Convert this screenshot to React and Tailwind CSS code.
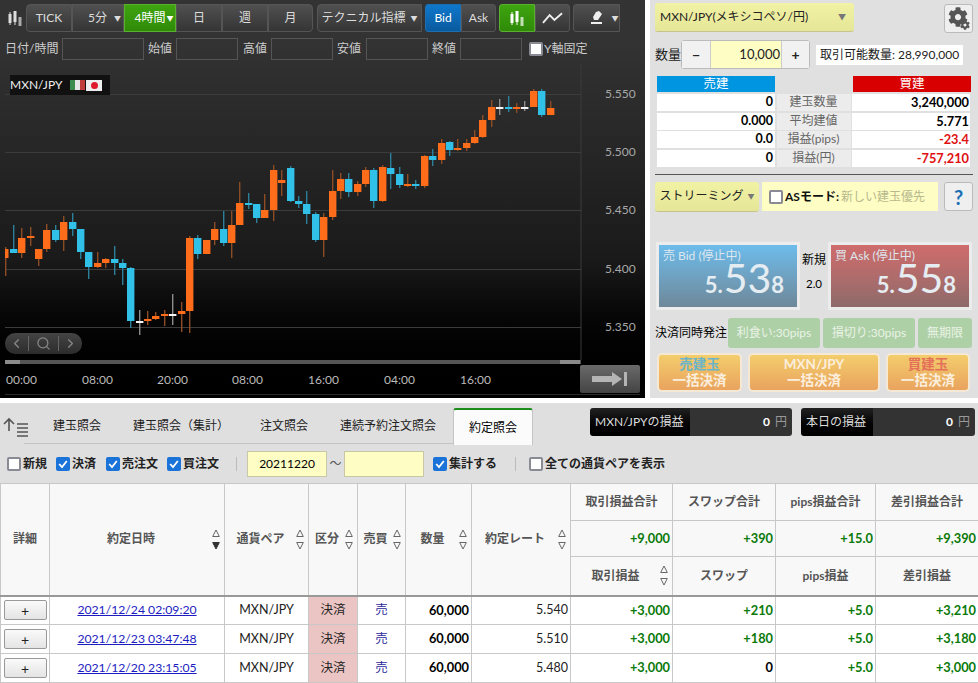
import { ChevronLeft, ChevronRight, Search } from 'lucide-react';
import { FaCog } from 'react-icons/fa';

const ORANGE = '#ff6d1a';
const BLUE = '#31c0e8';
const WHITE = '#f4f4f4';
const WICK = { o: '#8d4c24', b: '#2b7f98', w: '#8c8c8c' };
const BODY = { o: ORANGE, b: BLUE, w: WHITE };

// x, body top, body bottom, wick top, wick bottom, colour
const CANDLES = [
  [5, 249, 258, 247, 276, 'o'], [13, 249, 253, 225, 253, 'b'], [21, 238, 253, 228, 258, 'o'], [30, 236, 238, 227, 246, 'o'],
  [38, 249, 259, 249, 266, 'o'], [46, 230, 249, 224, 252, 'o'], [55, 230, 240, 225, 242, 'b'], [63, 222, 240, 216, 251, 'o'],
  [72, 222, 229, 213, 236, 'b'], [80, 229, 252, 229, 259, 'b'], [88, 252, 267, 252, 279, 'b'], [97, 263, 267, 252, 268, 'o'],
  [105, 259, 263, 258, 268, 'o'], [114, 259, 263, 246, 275, 'b'], [122, 263, 268, 259, 285, 'b'], [130, 268, 321, 267, 328, 'b'],
  [139, 321, 323, 310, 335, 'w'], [147, 319, 321, 311, 325, 'o'], [155, 316, 319, 312, 320, 'o'], [164, 314, 316, 310, 326, 'o'],
  [172, 314, 316, 294, 325, 'w'], [181, 311, 314, 302, 332, 'o'], [189, 238, 311, 236, 333, 'o'], [197, 238, 254, 235, 259, 'b'],
  [206, 240, 254, 240, 254, 'o'], [214, 229, 240, 222, 245, 'o'], [223, 229, 243, 211, 246, 'b'], [231, 225, 243, 211, 258, 'o'],
  [239, 203, 225, 182, 225, 'o'], [248, 203, 205, 193, 209, 'b'], [256, 204, 218, 204, 223, 'b'], [264, 210, 218, 194, 218, 'o'],
  [273, 170, 210, 165, 221, 'o'], [281, 180, 183, 170, 196, 'o'], [290, 168, 201, 166, 202, 'b'], [298, 201, 204, 196, 208, 'b'],
  [306, 204, 214, 191, 224, 'b'], [315, 214, 240, 212, 242, 'b'], [323, 217, 240, 213, 257, 'o'], [332, 191, 217, 170, 220, 'o'],
  [340, 179, 191, 173, 199, 'o'], [348, 179, 192, 173, 197, 'b'], [357, 184, 192, 181, 196, 'o'], [365, 170, 184, 167, 187, 'o'],
  [373, 170, 201, 168, 208, 'b'], [382, 167, 201, 165, 202, 'o'], [390, 168, 174, 153, 189, 'b'], [399, 174, 185, 167, 188, 'b'],
  [407, 184, 186, 174, 187, 'o'], [415, 184, 186, 180, 189, 'b'], [424, 156, 186, 155, 188, 'o'], [432, 156, 160, 149, 166, 'b'],
  [441, 143, 160, 139, 164, 'o'], [449, 142, 150, 141, 156, 'b'], [457, 148, 150, 139, 151, 'o'], [466, 143, 148, 139, 151, 'o'],
  [474, 137, 143, 130, 144, 'o'], [482, 120, 137, 115, 138, 'o'], [491, 107, 120, 100, 127, 'o'], [499, 107, 109, 99, 115, 'w'],
  [508, 107, 109, 96, 112, 'b'], [516, 107, 109, 103, 113, 'o'], [524, 107, 109, 101, 111, 'w'], [533, 91, 107, 89, 107, 'o'],
  [541, 91, 115, 89, 117, 'b'], [550, 108, 115, 101, 115, 'o'],
];

const GRID = [
  [94, '5.550'],
  [152, '5.500'],
  [210, '5.450'],
  [269, '5.400'],
  [327, '5.350'],
];
const TIMES = [[6, '00:00'], [82, '08:00'], [157, '20:00'], [232, '08:00'], [308, '16:00'], [384, '04:00'], [460, '16:00']];

const TRADES = [
  ['2021/12/24 02:09:20', '5.540', '+3,000', '+210', '+5.0', '+3,210'],
  ['2021/12/23 03:47:48', '5.510', '+3,000', '+180', '+5.0', '+3,180'],
  ['2021/12/20 23:15:05', '5.480', '+3,000', '0', '+5.0', '+3,000'],
];

const TONES = {
  dark: 'text-[#ddd] border-[#555] from-[#505050] to-[#353535]',
  green: 'text-white border-[#5cb030] from-[#3ea40f] to-[#2f8a08]',
  blue: 'text-white border-[#1c6fb0] from-[#0f78cc] to-[#0a5a9e]',
};

function CandleIcon({ className }) {
  return (
    <svg viewBox="0 0 14 15" className={className} fill="currentColor">
      <rect x="0.5" y="3" width="3" height="9" />
      <rect x="1.5" y="1" width="1" height="13" />
      <rect x="5.5" y="0" width="3" height="11" />
      <rect x="6.5" y="0" width="1" height="14" />
      <rect x="10.5" y="6" width="3" height="9" opacity="0.7" />
    </svg>
  );
}

function ToolButton({ tone = 'dark', className, children }) {
  return (
    <div className={`h-[28px] flex items-center justify-center text-[12px] border bg-linear-to-b ${TONES[tone]} ${className}`}>
      {children}
    </div>
  );
}

function Toolbar() {
  return (
    <div className="flex items-center h-[28px] mt-[4px]">
      <CandleIcon className="w-[14px] h-[15px] ml-[8px] mr-[4px] text-[#ddd]" />
      <ToolButton className="w-[46px] rounded-tl-[4px] rounded-bl-[4px]">TICK</ToolButton>
      <ToolButton className="w-[52px] gap-[7px] pl-[13px]">5分<span className="text-[7px]">▼</span></ToolButton>
      <ToolButton tone="green" className="w-[52px] gap-[1px] pl-[8px]">4時間<span className="text-[7px]">▼</span></ToolButton>
      <ToolButton className="w-[46px]">日</ToolButton>
      <ToolButton className="w-[46px]">週</ToolButton>
      <ToolButton className="w-[45px] rounded-tr-[4px] rounded-br-[4px]">月</ToolButton>
      <ToolButton className="w-[105px] ml-[4px] gap-[5px] rounded-l-[4px]">テクニカル指標<span className="text-[7px]">▼</span></ToolButton>
      <ToolButton tone="blue" className="w-[36px] ml-[3px] rounded-l-[3px]">Bid</ToolButton>
      <ToolButton className="w-[35px] rounded-r-[3px]">Ask</ToolButton>
      <ToolButton tone="green" className="w-[36px] ml-[3px] rounded-l-[3px]">
        <CandleIcon className="w-[14px] h-[15px]" />
      </ToolButton>
      <ToolButton className="w-[35px] rounded-r-[3px]">
        <svg viewBox="0 0 22 12" className="w-[21px] h-[12px]" fill="none" stroke="#eee" strokeWidth="2">
          <path d="M1 11 L8 3 L13 8 L21 1" />
        </svg>
      </ToolButton>
      <ToolButton className="w-[47px] ml-[3px] gap-[9px] pl-[16px] rounded-l-[3px]">
        <svg viewBox="0 0 12 14" className="w-[12px] h-[14px]" fill="#eee">
          <path d="M5 1 L8 0 L11 3 L7 9 L3 9 L2 6 Z" />
          <rect x="0" y="11" width="11" height="2" />
        </svg>
        <span className="text-[7px]">▼</span>
      </ToolButton>
    </div>
  );
}

function OhlcField({ label, labelClass, inputClass }) {
  return (
    <>
      <span className={`text-[12px] text-[#ccc] ${labelClass}`}>{label}</span>
      <div className={`h-[22px] border border-[#555] ${inputClass}`} />
    </>
  );
}

function OhlcRow() {
  return (
    <div className="flex items-center h-[22px] mt-[6px] pl-[5px]">
      <OhlcField label="日付/時間" labelClass="w-[57px]" inputClass="w-[82px]" />
      <OhlcField label="始値" labelClass="w-[28px] ml-[4px]" inputClass="w-[62px]" />
      <OhlcField label="高値" labelClass="w-[28px] ml-[5px]" inputClass="w-[62px]" />
      <OhlcField label="安値" labelClass="w-[29px] ml-[4px]" inputClass="w-[62px]" />
      <OhlcField label="終値" labelClass="w-[28px] ml-[4px]" inputClass="w-[62px]" />
      <span className="w-[14px] h-[14px] ml-[7px] bg-white border-2 border-[#8a8a94] rounded-[2px]" />
      <span className="ml-[1px] text-[12px] text-[#ccc]">Y軸固定</span>
    </div>
  );
}

function ChartSvg() {
  return (
    <svg viewBox="0 60 645 338" className="absolute left-0 top-0 w-[645px] h-[338px]">
      <line x1="581" x2="581" y1="64" y2="360" stroke="#3a3a3a" />
      {GRID.map(([y, label]) => (
        <g key={y}>
          <line x1="5" x2="581" y1={y + 0.5} y2={y + 0.5} stroke="#3c3c3c" />
          <text x="605" y={y + 4} fontSize="12" fill="#a8a8a8">{label}</text>
        </g>
      ))}
      {CANDLES.map(([x, top, bottom, wickTop, wickBottom, c]) => (
        <g key={x}>
          <rect x={x} y={wickTop} width="1.4" height={wickBottom - wickTop} fill={WICK[c]} />
          <rect x={Math.max(x - 3, 5)} y={top} width={x - 3 < 5 ? 3.5 : 7.4} height={bottom - top} fill={BODY[c]} />
        </g>
      ))}
      <rect x="5" y="360" width="576" height="4" fill="#555" />
      <rect x="5" y="360" width="15" height="4" fill="#8a8a8a" />
      <rect x="560" y="360" width="20" height="4" fill="#8a8a8a" />
      {TIMES.map(([x, label], i) => (
        <text key={i} x={x} y="384" fontSize="12" fill="#bbb">{label}</text>
      ))}
      <line x1="5" x2="640" y1="394.5" y2="394.5" stroke="#2b2b2b" />
    </svg>
  );
}

function ChartPanel() {
  return (
    <div className="w-[645px] h-[398px] bg-linear-to-b from-[#333] from-10% via-[#1a1a1a] via-65% to-black">
      <Toolbar />
      <OhlcRow />
      <div className="relative h-[338px]">
        <ChartSvg />
        <div className="absolute left-[10px] top-[15px] w-[100px] h-[20px] bg-[#111] flex items-center">
          <span className="text-[12px] text-[#eee]">MXN/JPY</span>
          <span className="flex w-[15px] h-[10px] ml-[8px]">
            <span className="flex-1 bg-[#3d8b4d]" />
            <span className="flex-1 bg-[#e6e6e6]" />
            <span className="flex-1 bg-[#c23b3b]" />
          </span>
          <span className="flex items-center justify-center w-[16px] h-[11px] ml-[1px] bg-[#eee]">
            <span className="w-[7px] h-[7px] rounded-full bg-[#e0192c]" />
          </span>
        </div>
        <div className="absolute left-[5px] top-[273px] w-[77px] h-[21px] rounded-[10px] bg-linear-to-b from-[#444] to-[#2c2c2c] flex items-center text-[#888]">
          <span className="w-[24px] flex justify-center border-r border-[#666]"><ChevronLeft size={15} /></span>
          <span className="w-[30px] flex justify-center border-r border-[#666]"><Search size={15} /></span>
          <span className="flex-1 flex justify-center"><ChevronRight size={15} /></span>
        </div>
        <div className="absolute left-[580px] top-[305px] w-[60px] h-[28px] rounded-[2px] bg-linear-to-b from-[#6a6a6a] to-[#444] flex items-center justify-center">
          <svg viewBox="0 0 36 14" className="w-[36px] h-[14px]" fill="#b4b4b4">
            <path d="M0 4 H20 V0 L30 7 L20 14 V10 H0 Z" />
            <rect x="32" y="0" width="3" height="14" />
          </svg>
        </div>
      </div>
    </div>
  );
}

function PositionRow({ sell, label, buy, buyClass }) {
  return (
    <div className="flex h-[17px] mb-[1.5px] items-center text-[12px]">
      <span className="w-[118px] h-full bg-white text-right pr-[2px] text-[12.5px] font-bold text-black leading-[16px]">{sell}</span>
      <span className="w-[74px] h-full mx-[1.5px] bg-[#ececec] text-center text-[#666] leading-[16px]">{label}</span>
      <span className={`w-[118px] h-full bg-white text-right pr-[1px] text-[12.8px] font-bold leading-[16px] ${buyClass}`}>{buy}</span>
    </div>
  );
}

function PriceBox({ title, big, gradient }) {
  return (
    <div className={`w-[144px] h-[68px] border-[3px] border-[#ececec] ${gradient}`}>
      <div className="pl-[4px] pt-[2px] text-[12px] text-[#dde7ee] leading-[18px]">{title}</div>
      <div className="flex items-baseline justify-end pr-[13px] text-[#e6edf2] mt-[-7px]">
        <span className="text-[22px] font-bold leading-[40px] mr-[1px]">5.</span>
        <span className="text-[41px] leading-[40px]">{big}</span>
        <span className="text-[22px] font-bold leading-[40px]">8</span>
      </div>
    </div>
  );
}

function SettleButton({ className, top, topClass }) {
  return (
    <div className={`h-[39px] rounded-[5px] border-2 border-[#f5e8d4] bg-linear-to-b from-[#f3cd6c] to-[#e9a35e] flex flex-col items-center justify-center text-[13.5px] leading-[16.2px] font-bold ${className}`}>
      <span className={topClass}>{top}</span>
      <span className="text-[#fbeedd]">一括決済</span>
    </div>
  );
}

function OrderPanel() {
  return (
    <div className="w-[328px] h-[398px] ml-[5px] bg-[#e0e0e0] pl-[5px] pr-[5px] text-[#222]">
      <div className="flex justify-between pt-[3px]">
        <div className="w-[199px] h-[29px] rounded-[3px] border-b border-[#c6c48c] bg-linear-to-b from-[#f2f2a4] to-[#e6e698] flex items-center justify-between pl-[5px] pr-[8px] text-[12px]">
          <span>MXN/JPY(メキシコペソ/円)</span>
          <span className="text-[8px] text-[#777]">▼</span>
        </div>
        <div className="relative w-[29px] h-[29px] mt-[1px] rounded-[3px] border border-[#bbb] bg-[#efefef]">
          <FaCog className="absolute left-[3px] top-[2px] text-[#555]" size={20} />
          <FaCog className="absolute right-[2px] bottom-[2px] text-[#555]" size={10} />
        </div>
      </div>
      <div className="flex items-center mt-[7px] h-[29px]">
        <span className="w-[26px] text-[13px] leading-none">数量</span>
        <div className="flex h-[29px] w-[129px] rounded-[3px] border border-[#bbb] text-[14px]">
          <span className="w-[29px] flex items-center justify-center bg-[#f1f1f1] border-r border-[#ccc] font-bold">−</span>
          <span className="flex-1 flex items-center justify-end pr-[1px] bg-[#fdfdc4] text-[13px]">10,000</span>
          <span className="w-[28px] flex items-center justify-center bg-[#f1f1f1] border-l border-[#ccc] font-bold">+</span>
        </div>
        <span className="ml-[6px] w-[147px] h-[20px] bg-white text-[12px] leading-[20px] text-center">取引可能数量: 28,990,000</span>
      </div>
      <div className="mt-[7px] ml-[2px]">
        <div className="flex h-[16px] mb-[2px] text-[12.5px] text-white text-center leading-[16px]">
          <span className="w-[118px] bg-[#0095e0]">売建</span>
          <span className="w-[78px]" />
          <span className="w-[118px] bg-[#d80000]">買建</span>
        </div>
        <PositionRow sell="0" label="建玉数量" buy="3,240,000" buyClass="text-black" />
        <PositionRow sell="0.000" label="平均建値" buy="5.771" buyClass="text-black" />
        <PositionRow sell="0.0" label="損益(pips)" buy="-23.4" buyClass="text-[#e01010]" />
        <PositionRow sell="0" label="損益(円)" buy="-757,210" buyClass="text-[#e01010]" />
      </div>
      <div className="h-[1px] bg-[#555] mt-[7px] w-[318px]" />
      <div className="flex items-center mt-[7px] h-[30px]">
        <div className="w-[104px] h-[30px] rounded-[3px] border-b border-[#c6c48c] bg-linear-to-b from-[#f2f2a4] to-[#e6e698] flex items-center justify-center gap-[4px] text-[12px]">
          ストリーミング<span className="text-[7px] text-[#777]">▼</span>
        </div>
        <div className="ml-[3px] w-[176px] h-[29px] bg-[#fdfdc4] flex items-center pl-[7px] text-[12px]">
          <span className="w-[14px] h-[14px] bg-white border-2 border-[#8a8a94] rounded-[2px]" />
          <span className="ml-[2px] font-bold text-[#111]">ASモード:</span>
          <span className="ml-[2px] text-[#b8b88c]">新しい建玉優先</span>
        </div>
        <div className="ml-[6px] w-[29px] h-[29px] rounded-[3px] border border-[#bbb] bg-[#efefef] flex items-center justify-center text-[20px] font-bold text-[#1a6fb5]">?</div>
      </div>
      <div className="flex items-stretch mt-[30px] ml-[1px]">
        <PriceBox title="売 Bid (停止中)" big="53" gradient="bg-linear-to-b from-[#6cbcec] to-[#6e8899]" />
        <div className="w-[28px] flex flex-col items-center text-[12px] text-black pt-[9px]">
          <span>新規</span>
          <span className="mt-[6px] text-[11.5px]">2.0</span>
        </div>
        <PriceBox title="買 Ask (停止中)" big="55" gradient="bg-linear-to-b from-[#d06c6c] to-[#8e6a6a]" />
      </div>
      <div className="flex items-center mt-[8px] h-[30px]">
        <span className="w-[73px] text-[12px] text-black whitespace-nowrap">決済同時発注</span>
        <div className="w-[92px] h-[30px] rounded-[3px] bg-[#aed0a6] text-[12px] text-[#eaf3e7] flex items-center justify-center">利食い:30pips</div>
        <div className="w-[92px] h-[30px] ml-[3px] rounded-[3px] bg-[#aed0a6] text-[12px] text-[#eaf3e7] flex items-center justify-center">損切り:30pips</div>
        <div className="w-[54px] h-[30px] ml-[3px] rounded-[3px] bg-[#aed0a6] text-[12px] text-[#eaf3e7] flex items-center justify-center">無期限</div>
      </div>
      <div className="flex mt-[5px] ml-[2px]">
        <SettleButton className="w-[85px]" top="売建玉" topClass="text-[#6cb4c8]" />
        <SettleButton className="w-[132px] ml-[6px]" top="MXN/JPY" topClass="text-[#fbeedd]" />
        <SettleButton className="w-[84px] ml-[6px]" top="買建玉" topClass="text-[#e4705a]" />
      </div>
    </div>
  );
}

function Check({ checked }) {
  if (!checked) {
    return <span className="w-[14px] h-[14px] bg-white border-2 border-[#8a8a94] rounded-[2px]" />;
  }
  return (
    <span className="w-[14px] h-[14px] bg-[#1a73d8] rounded-[2px] flex items-center justify-center">
      <svg viewBox="0 0 12 12" className="w-[12px] h-[12px]" fill="none" stroke="#fff" strokeWidth="1.8">
        <path d="M2.2 6 L5 9 L9.8 3" />
      </svg>
    </span>
  );
}

function Filter({ checked, label, className }) {
  return (
    <label className={`flex items-center gap-[2px] font-bold text-[12px] text-[#222] ${className}`}>
      <Check checked={checked} />
      {label}
    </label>
  );
}

function TabBar() {
  const tabs = [
    ['建玉照会', 'ml-[24px]'],
    ['建玉照会（集計）', 'ml-[32px]'],
    ['注文照会', 'ml-[31px]'],
    ['連続予約注文照会', 'ml-[32px]'],
  ];
  return (
    <div className="flex h-[41px] pt-[5px]">
      <svg viewBox="0 0 26 20" className="w-[26px] h-[20px] ml-[3px] mt-[9px]" fill="none" stroke="#555" strokeWidth="1.6">
        <path d="M6 14 V2 M1 7 L6 2 L11 7" />
        <path d="M14 7 H25 M14 11 H25 M14 15 H25 M14 19 H25" strokeWidth="1.3" />
      </svg>
      <div className="flex border-b border-[#c4c4c4] h-[36px] items-center ml-[-5px] pl-[5px] w-[429px]">
        {tabs.map(([label, margin]) => (
          <span key={label} className={`text-[12px] text-[#222] whitespace-nowrap ${margin}`}>{label}</span>
        ))}
      </div>
      <div className="w-[80px] h-[37px] bg-[#fbfbfb] border border-[#c4c4c4] border-t-2 border-t-[#1c8c1c] border-b-0 rounded-t-[3px] text-[12px] flex items-center justify-center">約定照会</div>
      <div className="flex ml-[57px] h-[28px]">
        <div className="w-[100px] rounded-l-[3px] bg-linear-to-b from-[#222] to-black text-[12px] text-[#ddd] flex items-center pl-[5px]">MXN/JPYの損益</div>
        <div className="w-[102px] rounded-r-[3px] bg-[#333] text-[12px] text-[#999] flex items-center justify-end pr-[5px] gap-[5px]"><span className="font-bold text-white">0</span>円</div>
        <div className="w-[72px] ml-[9px] rounded-l-[3px] bg-linear-to-b from-[#222] to-black text-[12px] text-[#ddd] flex items-center pl-[5px]">本日の損益</div>
        <div className="w-[102px] rounded-r-[3px] bg-[#333] text-[12px] text-[#999] flex items-center justify-end pr-[5px] gap-[5px]"><span className="font-bold text-white">0</span>円</div>
      </div>
    </div>
  );
}

function FilterRow() {
  return (
    <div className="flex items-center h-[39px] pl-[7px]">
      <Filter label="新規" className="w-[49px]" />
      <Filter checked label="決済" className="w-[50px]" />
      <Filter checked label="売注文" className="w-[61px]" />
      <Filter checked label="買注文" className="w-[69px]" />
      <span className="w-[1px] h-[14px] bg-[#bbb]" />
      <div className="ml-[10px] w-[80px] h-[26px] bg-[#fdfdc4] border border-[#c8c8a8] text-[12px] flex items-center justify-center">20211220</div>
      <span className="w-[17px] text-center text-[12px] text-[#555]">〜</span>
      <div className="w-[80px] h-[26px] bg-[#fdfdc4] border border-[#c8c8a8]" />
      <Filter checked label="集計する" className="ml-[9px] w-[82px]" />
      <span className="w-[1px] h-[14px] bg-[#bbb]" />
      <Filter label="全ての通貨ペアを表示" className="ml-[13px]" />
    </div>
  );
}

function SortArrows({ down }) {
  return (
    <span className="flex flex-col gap-[5px] shrink-0">
      <svg viewBox="0 0 8 8" className="w-[8px] h-[8px]" fill="none" stroke="#666"><path d="M4 1 L7.3 7.5 H0.7 Z" /></svg>
      <svg viewBox="0 0 8 8" className="w-[8px] h-[8px]" fill={down ? '#333' : 'none'} stroke={down ? '#333' : '#666'}><path d="M0.7 0.5 H7.3 L4 7 Z" /></svg>
    </span>
  );
}

function SortHead({ label, down, rowSpan }) {
  return (
    <th rowSpan={rowSpan} className="border border-[#c8c8c8] border-b-2 border-b-[#999] bg-[#f8f8f8] font-bold text-[12px] text-[#555]">
      <span className="flex items-center justify-between pr-[4px]">
        <span className="flex-1 text-center">{label}</span>
        <SortArrows down={down} />
      </span>
    </th>
  );
}

function TradeTable() {
  const sub = 'border border-[#c8c8c8] bg-[#f8f8f8] font-bold text-[12px] text-[#555] text-center';
  const total = 'border border-[#c8c8c8] bg-[#f8f8f8] font-bold text-[12.8px] text-[#0a7a0a] text-right pr-[2px]';
  const cell = 'border border-[#c8c8c8] h-[29px] text-[12.5px] p-0';
  const green = `${cell} text-right pr-[2px] text-[12.8px] font-bold text-[#0a7a0a]`;
  return (
    <table className="table-fixed w-[978px] border-collapse bg-white">
      <colgroup>
        <col className="w-[49px]" /><col className="w-[175px]" /><col className="w-[84px]" /><col className="w-[49px]" />
        <col className="w-[48px]" /><col className="w-[66px]" /><col className="w-[99px]" /><col className="w-[102px]" />
        <col className="w-[103px]" /><col className="w-[100px]" /><col className="w-[103px]" />
      </colgroup>
      <thead>
        <tr className="h-[37px]">
          <th rowSpan={3} className="border border-[#c8c8c8] border-b-2 border-b-[#999] bg-[#f8f8f8] font-bold text-[12px] text-[#555]">詳細</th>
          <SortHead rowSpan={3} label="約定日時" down />
          <SortHead rowSpan={3} label="通貨ペア" />
          <SortHead rowSpan={3} label="区分" />
          <SortHead rowSpan={3} label="売買" />
          <SortHead rowSpan={3} label="数量" />
          <SortHead rowSpan={3} label="約定レート" />
          <th className={sub}>取引損益合計</th>
          <th className={sub}>スワップ合計</th>
          <th className={sub}>pips損益合計</th>
          <th className={sub}>差引損益合計</th>
        </tr>
        <tr className="h-[36px]">
          <th className={total}>+9,000</th>
          <th className={total}>+390</th>
          <th className={total}>+15.0</th>
          <th className={total}>+9,390</th>
        </tr>
        <tr className="h-[39px]">
          <SortHead label="取引損益" />
          <th className={`${sub} border-b-2 border-b-[#999]`}>スワップ</th>
          <th className={`${sub} border-b-2 border-b-[#999]`}>pips損益</th>
          <th className={`${sub} border-b-2 border-b-[#999]`}>差引損益</th>
        </tr>
      </thead>
      <tbody>
        {TRADES.map(([time, rate, profit, swap, pips, net]) => (
          <tr key={time}>
            <td className={cell}>
              <div className="mx-auto w-[43px] h-[20px] rounded-[2px] border border-[#999] bg-linear-to-b from-[#fafafa] to-[#e4e4e4] flex items-center justify-center text-[14px] text-[#222]">+</div>
            </td>
            <td className={`${cell} text-center`}><a href="#" className="text-[12.2px] text-[#1c1cc0] underline">{time}</a></td>
            <td className={`${cell} text-center text-[#222]`}>MXN/JPY</td>
            <td className={`${cell} text-center text-[#222] bg-[#ebc5c3]`}>決済</td>
            <td className={`${cell} text-center text-[#2a2a9a]`}>売</td>
            <td className={`${cell} text-right pr-[2px] text-[12.8px] font-bold text-black`}>60,000</td>
            <td className={`${cell} text-right pr-[2px] text-[#222]`}>{rate}</td>
            <td className={green}>{profit}</td>
            <td className={swap === '0' ? `${cell} text-right pr-[2px] text-[12.8px] font-bold text-black` : green}>{swap}</td>
            <td className={green}>{pips}</td>
            <td className={green}>{net}</td>
          </tr>
        ))}
      </tbody>
    </table>
  );
}

export default function App() {
  return (
    <div className="w-[978px] h-[683px] overflow-hidden bg-white font-['Lato','Noto_Sans_CJK_JP',sans-serif]">
      <div className="flex">
        <ChartPanel />
        <OrderPanel />
      </div>
      <div className="mt-[5px] h-[280px] bg-[#dfdfdf]">
        <TabBar />
        <FilterRow />
        <TradeTable />
      </div>
    </div>
  );
}
